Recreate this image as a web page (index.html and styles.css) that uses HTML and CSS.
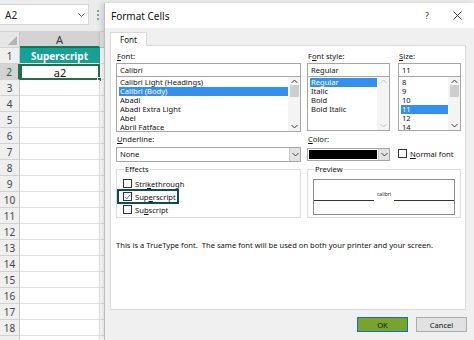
FILE: index.html
```html
<!DOCTYPE html>
<html>
<head>
<meta charset="utf-8">
<link rel="stylesheet" href="styles.css">
</head>
<body>
<div class="screen">
  <div class="excel">
    <div class="toolbar">
      <div class="namebox">
        <span class="nb-text">A2</span>
        <svg class="nb-arrow" width="7" height="4" viewBox="0 0 7 4"><path d="M0.5 0.5 L3.5 3.5 L6.5 0.5" fill="none" stroke="#555" stroke-width="1"/></svg>
      </div>
      <div class="grip"><i></i><i></i><i></i></div>
    </div>
    <div class="sheet">
      <div class="row hdr">
        <div class="rh corner"><svg width="9" height="9" viewBox="0 0 9 9"><path d="M9 0 L9 9 L0 9 Z" fill="#b4b4b4"/></svg></div>
        <div class="cell col-a col-hdr">A</div>
        <div class="cell rest hdr-rest"></div>
      </div>
      <div class="row"><div class="rh">1</div><div class="cell col-a teal">Superscript</div><div class="cell rest"></div></div>
      <div class="row"><div class="rh rh-sel">2</div><div class="cell col-a active">a2<span class="handle"></span></div><div class="cell rest"></div></div>
      <div class="row"><div class="rh">3</div><div class="cell col-a"></div><div class="cell rest"></div></div>
      <div class="row"><div class="rh">4</div><div class="cell col-a"></div><div class="cell rest"></div></div>
      <div class="row"><div class="rh">5</div><div class="cell col-a"></div><div class="cell rest"></div></div>
      <div class="row"><div class="rh">6</div><div class="cell col-a"></div><div class="cell rest"></div></div>
      <div class="row"><div class="rh">7</div><div class="cell col-a"></div><div class="cell rest"></div></div>
      <div class="row"><div class="rh">8</div><div class="cell col-a"></div><div class="cell rest"></div></div>
      <div class="row"><div class="rh">9</div><div class="cell col-a"></div><div class="cell rest"></div></div>
      <div class="row"><div class="rh">10</div><div class="cell col-a"></div><div class="cell rest"></div></div>
      <div class="row"><div class="rh">11</div><div class="cell col-a"></div><div class="cell rest"></div></div>
      <div class="row"><div class="rh">12</div><div class="cell col-a"></div><div class="cell rest"></div></div>
      <div class="row"><div class="rh">13</div><div class="cell col-a"></div><div class="cell rest"></div></div>
      <div class="row"><div class="rh">14</div><div class="cell col-a"></div><div class="cell rest"></div></div>
      <div class="row"><div class="rh">15</div><div class="cell col-a"></div><div class="cell rest"></div></div>
      <div class="row"><div class="rh">16</div><div class="cell col-a"></div><div class="cell rest"></div></div>
      <div class="row"><div class="rh">17</div><div class="cell col-a"></div><div class="cell rest"></div></div>
      <div class="row"><div class="rh">18</div><div class="cell col-a"></div><div class="cell rest"></div></div>
      <div class="row"><div class="rh"></div><div class="cell col-a"></div><div class="cell rest"></div></div>
    </div>
  </div>

  <div class="dialog">
    <div class="titlebar">
      <span class="title">Format Cells</span>
      <span class="help">?</span>
      <svg class="close" width="9" height="9" viewBox="0 0 9 9"><path d="M0.5 0.5 L8.5 8.5 M8.5 0.5 L0.5 8.5" stroke="#333" stroke-width="1" fill="none"/></svg>
    </div>
    <div class="tabs"><div class="tab">Font</div></div>
    <div class="panel">
      <div class="grid">
        <div class="field">
          <div class="lbl"><u>F</u>ont:</div>
          <div class="input">Calibri</div>
          <div class="list list-font">
            <div class="items">
              <div class="item">Calibri Light (Headings)</div>
              <div class="item selected">Calibri (Body)</div>
              <div class="item">Abadi</div>
              <div class="item">Abadi Extra Light</div>
              <div class="item">Abel</div>
              <div class="item">Abril Fatface</div>
            </div>
            <div class="sbar">
              <svg class="arr" width="7" height="5" viewBox="0 0 7 5"><path d="M0.5 4 L3.5 1 L6.5 4" fill="none" stroke="#444"/></svg>
              <div class="thumb"></div>
              <div class="sfill"></div>
              <svg class="arr" width="7" height="5" viewBox="0 0 7 5"><path d="M0.5 1 L3.5 4 L6.5 1" fill="none" stroke="#444"/></svg>
            </div>
          </div>
        </div>
        <div class="field">
          <div class="lbl">F<u>o</u>nt style:</div>
          <div class="input">Regular</div>
          <div class="list list-small">
            <div class="items">
              <div class="item selected">Regular</div>
              <div class="item">Italic</div>
              <div class="item">Bold</div>
              <div class="item">Bold Italic</div>
            </div>
            <div class="sbar">
              <svg class="arr" width="7" height="5" viewBox="0 0 7 5"><path d="M0.5 4 L3.5 1 L6.5 4" fill="none" stroke="#c4c4c4"/></svg>
              <div class="sfill"></div>
              <svg class="arr" width="7" height="5" viewBox="0 0 7 5"><path d="M0.5 1 L3.5 4 L6.5 1" fill="none" stroke="#c4c4c4"/></svg>
            </div>
          </div>
        </div>
        <div class="field">
          <div class="lbl"><u>S</u>ize:</div>
          <div class="input">11</div>
          <div class="list list-small">
            <div class="items">
              <div class="item">8</div>
              <div class="item">9</div>
              <div class="item">10</div>
              <div class="item selected">11</div>
              <div class="item">12</div>
              <div class="item">14</div>
            </div>
            <div class="sbar">
              <svg class="arr" width="7" height="5" viewBox="0 0 7 5"><path d="M0.5 4 L3.5 1 L6.5 4" fill="none" stroke="#444"/></svg>
              <div class="thumb"></div>
              <div class="sfill"></div>
              <svg class="arr" width="7" height="5" viewBox="0 0 7 5"><path d="M0.5 1 L3.5 4 L6.5 1" fill="none" stroke="#444"/></svg>
            </div>
          </div>
        </div>

        <div class="field">
          <div class="lbl lbl2"><u>U</u>nderline:</div>
          <div class="combo">
            <span class="combo-val">None</span>
            <span class="combo-btn"><svg width="7" height="5" viewBox="0 0 7 5"><path d="M0.5 1 L3.5 4 L6.5 1" fill="none" stroke="#444"/></svg></span>
          </div>
        </div>
        <div class="field">
          <div class="lbl lbl2"><u>C</u>olor:</div>
          <div class="combo combo-color">
            <span class="swatch"></span>
            <span class="combo-btn"><svg width="7" height="5" viewBox="0 0 7 5"><path d="M0.5 1 L3.5 4 L6.5 1" fill="none" stroke="#444"/></svg></span>
          </div>
        </div>
        <div class="field normal">
          <div class="check-row"><span class="box"></span><span><u>N</u>ormal font</span></div>
        </div>

        <fieldset class="group effects">
          <legend>Effects</legend>
          <div class="check-row"><span class="box"></span><span>Stri<u>k</u>ethrough</span></div>
          <div class="check-row focus"><span class="box checked"><svg width="8" height="8" viewBox="0 0 8 8"><path d="M1 4 L3 6.2 L7 1.5" fill="none" stroke="#2a6fcf" stroke-width="1"/></svg></span><span>Sup<u>e</u>rscript</span></div>
          <div class="check-row"><span class="box"></span><span>Su<u>b</u>script</span></div>
        </fieldset>
        <fieldset class="group preview">
          <legend>Preview</legend>
          <div class="pv-box">
            <span class="pv-line"></span>
            <span class="pv-text">calibri</span>
            <span class="pv-line"></span>
          </div>
        </fieldset>
      </div>
      <p class="note">This is a TrueType font.&nbsp; The same font will be used on both your printer and your screen.</p>
    </div>
    <div class="footer">
      <button class="btn ok">OK</button>
      <button class="btn cancel">Cancel</button>
    </div>
  </div>
</div>
</body>
</html>
```

FILE: styles.css
```css
* { box-sizing: border-box; }
html, body { margin: 0; padding: 0; }
body { width: 474px; height: 340px; overflow: hidden; background: #fff; }

.screen { position: relative; width: 474px; height: 340px; overflow: hidden; font-family: "Noto Sans", "Open Sans", sans-serif; }

/* ---------- Excel ---------- */
.excel { width: 474px; height: 340px; background: #e9e9e9; }
.toolbar { height: 32px; display: flex; align-items: flex-start; padding-top: 4px; background: #ececec; border-bottom: 1px solid #d4d4d4; }
.namebox { width: 89px; height: 21px; background: #fff; border: 1px solid #d6d6d6; border-left: 0; display: flex; align-items: center; justify-content: space-between; padding: 0 3px 0 5px; }
.nb-text { font-size: 10px; color: #222; }
.nb-arrow { display: block; }
.grip { width: 3px; margin-left: 8px; margin-top: 6px; display: flex; flex-direction: column; gap: 2px; }
.grip i { display: block; width: 2px; height: 2px; background: #9a9a9a; }

.sheet { display: flex; flex-direction: column; }
.row { display: flex; height: 16px; }
.rh { width: 20px; flex: none; background: #efefef; border-right: 1px solid #c6c6c6; border-bottom: 1px solid #d2d2d2; font-size: 10px; color: #444; display: flex; align-items: center; justify-content: center; line-height: 1; }
.rh.corner { justify-content: flex-end; align-items: flex-end; padding: 0 2px 2px 0; background: #e6e6e6; }
.rh.corner svg { display: block; }
.rh-sel { background: #d3d3d3; color: #1e6b40; border-right: 2px solid #217346; }
.cell { height: 16px; border-right: 1px solid #e1e1e1; border-bottom: 1px solid #e1e1e1; background: #fff; }
.col-a { width: 80px; flex: none; display: flex; align-items: center; justify-content: center; font-size: 11px; color: #111; position: relative; }
.rest { flex: 1; }
.hdr .cell { background: #e6e6e6; border-right: 1px solid #c6c6c6; border-bottom: 1px solid #c6c6c6; }
.col-hdr { font-size: 11px; color: #333; background: #d3d3d3 !important; border-bottom: 2px solid #217346 !important; }
.teal { background: #17a096; color: #fff; font-weight: 700; font-size: 10px; border-right-color: #17a096; }
.active { border: 2px solid #1e7145; border-right-width: 2px; }
.handle { position: absolute; right: -4px; bottom: -4px; width: 5px; height: 5px; background: #1e7145; border: 1px solid #fff; }

/* ---------- Dialog ---------- */
.dialog { position: absolute; left: 104px; top: 3px; width: 370px; height: 337px; background: #f0f0f0; border-left: 1px solid #bdbdbd; box-shadow: -3px 0 5px rgba(0,0,0,0.12); display: flex; flex-direction: column; font-size: 7.6px; color: #111; }
.titlebar { height: 25px; background: #fff; display: flex; align-items: center; padding-left: 6px; flex: none; }
.title { font-size: 10px; color: #111; flex: 1; }
.help { font-size: 9px; color: #333; margin-right: 24px; }
.close { margin-right: 12px; display: block; }
.tabs { height: 17px; flex: none; padding-left: 5px; display: flex; align-items: flex-end; }
.tab { width: 37px; height: 14px; background: #fff; border: 1px solid #d9d9d9; border-bottom: 0; font-size: 8px; display: flex; align-items: center; justify-content: center; position: relative; top: 1px; }
.panel { margin: 0 8px 0 5px; height: 265px; flex: none; background: #fff; border: 1px solid #d9d9d9; padding: 5px 0 0 5px; }

.grid { display: grid; grid-template-columns: 185px 83px 65px; column-gap: 6px; row-gap: 0; }
.grid > :nth-child(3n+3) { margin-left: 2px; }
.field { display: flex; flex-direction: column; }
.lbl { height: 11px; line-height: 11px; margin-bottom: 1px; padding-left: 1px; }
.lbl2 { margin-top: 2px; }
.input { height: 14px; border: 1px solid #a6a6a6; line-height: 12px; padding-left: 3px; background: #fff; }
.list { height: 55px; margin-top: 0; border: 1px solid #a6a6a6; border-top: 0; display: flex; background: #fff; }
.list-small { height: 54px; }
.items { flex: 1; padding: 1px 0 0 2px; }
.item { height: 9px; line-height: 9px; padding-left: 1px; white-space: nowrap; }
.item.selected { background: #3390ef; color: #fff; }
.sbar { width: 12px; flex: none; background: #f4f4f4; display: flex; flex-direction: column; align-items: center; padding: 2px 0 2px; }
.arr { display: block; flex: none; }
.thumb { width: 9px; height: 12px; background: #cdcdcd; margin-top: 1px; flex: none; }
.sfill { flex: 1; }

.combo { height: 15px; border: 1px solid #a6a6a6; display: flex; background: #fff; margin-top: 1px; }
.combo-val { flex: 1; line-height: 13px; padding-left: 3px; }
.combo-btn { width: 11px; background: #e2e2e2; border-left: 1px solid #c8c8c8; display: flex; align-items: center; justify-content: center; }
.combo-btn svg { display: block; }
.combo-color { height: 13px; margin-top: 2px; }
.swatch { flex: 1; margin: 1px; background: #000; }

.normal { justify-content: flex-start; padding-top: 15px; }
.check-row { display: flex; align-items: center; gap: 3px; height: 13px; white-space: nowrap; }
.box { width: 9px; height: 9px; border: 1px solid #333; background: #fff; flex: none; display: flex; align-items: center; justify-content: center; }
.box svg { display: block; }

.group { margin: 3px 0 0 0; padding: 0; border: 1px solid #dcdcdc; min-width: 0; height: 53px; }
.group legend { padding: 0 1px; margin-left: 1px; line-height: 9px; font-size: 7.6px; }
.effects { padding: 3px 0 0 6px; }
.effects .check-row { height: 13px; }
.focus { width: 60px; margin-left: -5px; padding-left: 5px; outline: 2px solid #0f4f4a; outline-offset: -1px; }
.preview { grid-column: 2 / span 2; margin-right: 0; padding: 5px 5px 0 5px; }
.pv-box { height: 36px; border: 1px solid #8c8c8c; display: flex; align-items: flex-end; padding-bottom: 13px; }
.pv-line { flex: 1; height: 1px; background: #333; }
.pv-text { font-size: 5px; padding: 0 3px; position: relative; top: -4px; line-height: 1; font-family: "Open Sans", sans-serif; }

.note { margin: 22px 0 0 0; white-space: nowrap; }

.footer { flex: 1; display: flex; justify-content: flex-end; align-items: flex-start; padding: 7px 7px 0 0; gap: 8px; }
.btn { width: 51px; height: 15px; font-family: inherit; font-size: 7.6px; padding: 0; color: #111; }
.ok { background: #7aa32b; border: 1px solid #0f6fc8; }
.cancel { background: #e1e1e1; border: 1px solid #adadad; }
```
